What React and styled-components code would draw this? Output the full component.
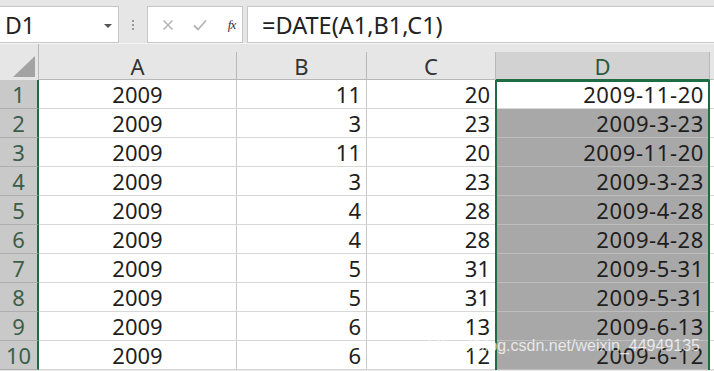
import React from 'react';
import styled, { createGlobalStyle, css } from 'styled-components';

const GREEN = '#1f6b43';

const GlobalStyle = createGlobalStyle`
  html, body { margin: 0; padding: 0; background: #e6e6e6; }
  body { font-family: "Noto Sans", "Liberation Sans", sans-serif; overflow: hidden; }
`;

const Page = styled.div`
  width: 714px;
  height: 371px;
  overflow: hidden;
  background: #e6e6e6;
`;

const Toolbar = styled.div`
  display: flex;
  align-items: flex-start;
  height: 44px;
  padding-top: 6px;
  box-sizing: border-box;
  border-bottom: 1px solid #f4f4f4;
`;

const NameBox = styled.div`
  width: 119px;
  height: 37px;
  box-sizing: border-box;
  background: #fff;
  border: 1px solid #c6c6c6;
  border-left: none;
  display: flex;
  align-items: center;
  justify-content: space-between;
  padding: 0 6px 0 5px;
  font-size: 23px;
  color: #222;
`;

const Caret = styled.span`
  width: 0;
  height: 0;
  border-left: 4px solid transparent;
  border-right: 4px solid transparent;
  border-top: 4px solid #555;
  margin-top: 2px;
`;

const Grip = styled.div`
  width: 28px;
  height: 37px;
  display: flex;
  flex-direction: column;
  align-items: center;
  justify-content: center;
  gap: 2px;
  span { width: 2px; height: 2px; background: #9a9a9a; }
`;

const FxButtons = styled.div`
  width: 96px;
  height: 37px;
  box-sizing: border-box;
  background: #fff;
  border: 1px solid #c6c6c6;
  display: flex;
  align-items: center;
  padding-left: 9px;
  gap: 11px;
`;

const IconSlot = styled.span`
  width: 22px;
  display: flex;
  justify-content: center;
  align-items: center;
`;

const Fx = styled.span`
  font-family: "Liberation Serif", serif;
  font-style: italic;
  font-size: 13px;
  color: #333;
  letter-spacing: -1px;
`;

const FormulaBox = styled.div`
  flex: 1;
  height: 37px;
  margin-left: 4px;
  box-sizing: border-box;
  background: #fff;
  border: 1px solid #c6c6c6;
  border-right: none;
  display: flex;
  align-items: center;
  padding-left: 14px;
  font-size: 23.5px;
  color: #222;
`;

const Sheet = styled.div`
  display: grid;
  grid-template-columns: 39px 198px 130px 129px 214px 1fr;
  grid-template-rows: 36px repeat(10, 29px);
`;

const placed = css`
  grid-column: ${p => p.$col};
  grid-row: ${p => p.$row};
`;

const Corner = styled.div`
  ${placed}
  background: #e6e6e6;
  border-right: 1px solid #b8b8b8;
  display: flex;
  align-items: flex-end;
  justify-content: flex-end;
  padding: 0 3px 3px 0;
  box-sizing: border-box;
`;

const ColHead = styled.div`
  ${placed}
  margin-top: 8px;
  background: ${p => (p.$active ? '#d2d2d2' : '#e6e6e6')};
  border-right: 1px solid ${p => (p.$last ? 'transparent' : '#b8b8b8')};
  border-bottom: 1px solid ${p => (p.$active ? GREEN : '#b8b8b8')};
  display: flex;
  align-items: center;
  justify-content: center;
  font-size: 22px;
  color: ${p => (p.$active ? '#2a5a3e' : '#333')};
  box-sizing: border-box;
`;

const RowHead = styled.div`
  ${placed}
  background: #c9c9c9;
  border-right: 2px solid ${GREEN};
  border-bottom: 1px solid #aeaeae;
  display: flex;
  align-items: center;
  justify-content: center;
  font-size: 22px;
  color: #3a5e4a;
  box-sizing: border-box;
`;

const Cell = styled.div`
  ${placed}
  background: ${p => (p.$selected ? '#a8a8a8' : '#fff')};
  border-right: 1px solid ${p => (p.$selected ? '#a8a8a8' : '#c8c8c8')};
  border-bottom: 1px solid ${p => (p.$selected ? '#bdbdbd' : '#d8d8d8')};
  display: flex;
  align-items: center;
  justify-content: ${p => (p.$align === 'center' ? 'center' : 'flex-end')};
  padding-right: ${p => (p.$align === 'center' ? '0' : '5px')};
  font-size: 22px;
  letter-spacing: ${p => (p.$date ? '0.6px' : '0')};
  color: #1e1e1e;
  box-sizing: border-box;
  white-space: nowrap;
`;

const Spill = styled.div`
  ${placed}
  background: #fff;
  border-bottom: 1px solid #d8d8d8;
`;

const SelectionFrame = styled.div`
  grid-column: 5;
  grid-row: 2 / 12;
  border: 2px solid ${GREEN};
  border-bottom: none;
  margin-left: -1px;
  pointer-events: none;
  z-index: 2;
`;

const Watermark = styled.div`
  grid-column: 4 / 6;
  grid-row: 11;
  align-self: start;
  justify-self: end;
  margin-right: 10px;
  margin-top: -4px;
  font-family: "Liberation Sans", Arial, sans-serif;
  font-size: 16px;
  color: rgba(255, 255, 255, 0.75);
  z-index: 3;
  pointer-events: none;
`;

const rows = [
  [2009, 11, 20, '2009-11-20'],
  [2009, 3, 23, '2009-3-23'],
  [2009, 11, 20, '2009-11-20'],
  [2009, 3, 23, '2009-3-23'],
  [2009, 4, 28, '2009-4-28'],
  [2009, 4, 28, '2009-4-28'],
  [2009, 5, 31, '2009-5-31'],
  [2009, 5, 31, '2009-5-31'],
  [2009, 6, 13, '2009-6-13'],
  [2009, 6, 12, '2009-6-12'],
];

const columns = ['A', 'B', 'C', 'D'];

export default function App() {
  return (
    <Page>
      <GlobalStyle />
      <Toolbar>
        <NameBox>
          D1
          <Caret />
        </NameBox>
        <Grip><span /><span /><span /></Grip>
        <FxButtons>
          <IconSlot>
            <svg width="12" height="12" viewBox="0 0 12 12">
              <path d="M1.5 1.5 L10.5 10.5 M10.5 1.5 L1.5 10.5" stroke="#b4b4b4" strokeWidth="1.5" />
            </svg>
          </IconSlot>
          <IconSlot>
            <svg width="14" height="12" viewBox="0 0 14 12">
              <path d="M1 6.5 L5 10.5 L13 1.5" stroke="#b4b4b4" strokeWidth="1.8" fill="none" />
            </svg>
          </IconSlot>
          <IconSlot><Fx>fx</Fx></IconSlot>
        </FxButtons>
        <FormulaBox>=DATE(A1,B1,C1)</FormulaBox>
      </Toolbar>
      <Sheet>
        <Corner $col={1} $row={1}>
          <svg width="22" height="21" viewBox="0 0 22 21">
            <polygon points="22,0 22,21 0,21" fill="#a3a3a3" />
          </svg>
        </Corner>
        {columns.map((c, j) => (
          <ColHead key={c} $col={j + 2} $row={1} $active={c === 'D'}>{c}</ColHead>
        ))}
        <ColHead $col={6} $row={1} $last />
        {rows.map((r, i) => (
          <React.Fragment key={i}>
            <RowHead $col={1} $row={i + 2}>{i + 1}</RowHead>
            <Cell $col={2} $row={i + 2} $align="center">{r[0]}</Cell>
            <Cell $col={3} $row={i + 2}>{r[1]}</Cell>
            <Cell $col={4} $row={i + 2}>{r[2]}</Cell>
            <Cell $col={5} $row={i + 2} $date $selected={i > 0}>{r[3]}</Cell>
            <Spill $col={6} $row={i + 2} />
          </React.Fragment>
        ))}
        <SelectionFrame />
        <Watermark>https://blog.csdn.net/weixin_44949135</Watermark>
      </Sheet>
    </Page>
  );
}
